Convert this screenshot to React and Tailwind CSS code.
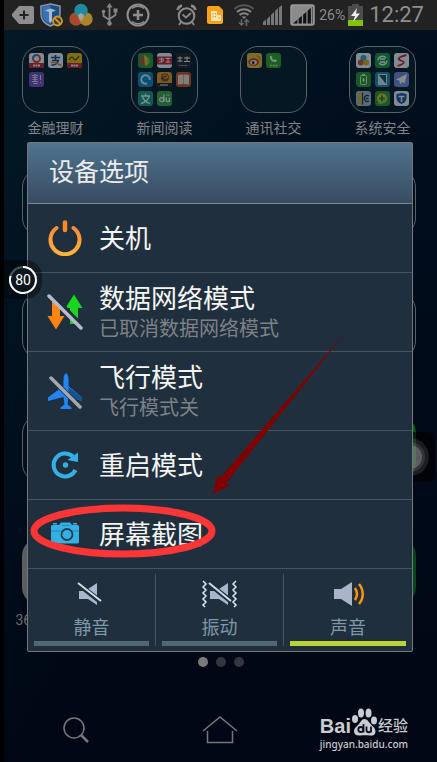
import React, { useState } from "react";

const CJK = "font-['Roboto','Noto_Sans_CJK_SC',sans-serif]";

// 15x15 drawings shown inside the home screen folders
const minis = {
  wallet: (
    <>
      <rect width="15" height="15" rx="3" fill="#fff"/>
      <circle cx="7.5" cy="5.5" r="3.5" fill="none" stroke="#d8413a" strokeWidth="2"/>
      <path d="M4 5.5a3.5 3.5 0 0 1 3.5-3.5" fill="none" stroke="#2f8fd0" strokeWidth="2"/>
      <path d="M0 10h15v2a3 3 0 0 1-3 3H3a3 3 0 0 1-3-3z" fill="#d81b24"/>
      <path d="M4 12.5h7" stroke="#fff" strokeWidth="2" strokeDasharray="2 .5"/>
    </>
  ),
  alipay: (
    <>
      <rect width="15" height="15" rx="3" fill="#fff"/>
      <path d="M3 4.5h9M7.5 2v5M4 7.5h6.500C9.500 10.500 6 12.500 3.500 12" fill="none" stroke="#1d3f7c" strokeWidth="1.500"/>
      <path d="M3 10c2-2.500 6 1 10.500 2.500" fill="none" stroke="#e88320" strokeWidth="1.500"/>
    </>
  ),
  lottery: (
    <>
      <rect width="15" height="15" rx="3" fill="#f2c400"/>
      <path d="M2 7c2-4 4-3 5-1s3 0 5-3M8 7l4-3" fill="none" stroke="#6b4300" strokeWidth="1.300"/>
      <path d="M0 10h15v2a3 3 0 0 1-3 3H3a3 3 0 0 1-3-3z" fill="#d81b24"/>
      <path d="M4 12.500h7" stroke="#fff" strokeWidth="2" strokeDasharray="2 .5"/>
    </>
  ),
  hui: (
    <>
      <rect width="15" height="15" rx="3" fill="#7a4fc4"/>
      <path d="M3 3.500h6M3.500 5.500h5M3.500 7.500h5M6 2v8M3 9.500h6M4 11.500h5M11.500 3v5M11.500 10v1" stroke="#e5d6ff" strokeWidth="1.100"/>
    </>
  ),
  books: (
    <>
      <rect width="15" height="15" rx="3" fill="#2f9a35"/>
      <path d="M3 3l5 2v8L3 11z" fill="#e5402b"/>
      <path d="M6 2c3 1 4 3 4 6s-1 4-3 5z" fill="#f4c425"/>
      <path d="M9 4c3 1 4 5 0 9z" fill="#73d23b"/>
    </>
  ),
  headline: (
    <>
      <rect width="15" height="15" rx="3" fill="#fff"/>
      <path d="M0 3.500h15v8H0z" fill="#d81b24"/>
      <path d="M2 6h5M4.500 4.500v5M2 9.500l5-2M8.500 5.500h5M11 4.500v5M8.500 9h5" stroke="#fff"/>
    </>
  ),
  reader: (
    <>
      <rect width="15" height="15" rx="3" fill="#28211f"/>
      <path d="M1.500 5h5M4 3.500v5.500M1.500 8h5M8 5h6M11 3.500v5.500M8 8.500h6" stroke="#fff"/>
      <path d="M3 12.500h9" stroke="#aaa" strokeDasharray="1 .5"/>
    </>
  ),
  swirl: (
    <>
      <rect width="15" height="15" rx="3" fill="#0d87bd"/>
      <path d="M9 11.500A4.300 4.300 0 1 1 11.800 8" fill="none" stroke="#d9f2ff" strokeWidth="2"/>
    </>
  ),
  comic: (
    <>
      <rect width="15" height="15" rx="3" fill="#e9a11c"/>
      <circle cx="8" cy="5.500" r="4" fill="#8b3d16"/>
      <path d="M5.500 5a2.500 2.500 0 0 1 5 1M7 6h3" fill="none" stroke="#f0b44a"/>
      <path d="M0 11h15v1a3 3 0 0 1-3 3H3a3 3 0 0 1-3-3z" fill="#201b17"/>
      <path d="M3 13h8" stroke="#fff"/>
    </>
  ),
  book: (
    <>
      <rect width="15" height="15" rx="3" fill="#d4551a"/>
      <path d="M2 3l5.500-.5v9.500L2 12.500zM8 2.500l5 .5v9.500L8 12z" fill="#f6e6d2"/>
    </>
  ),
  translate: (
    <>
      <rect width="15" height="15" rx="3" fill="#12a37f"/>
      <path d="M3 5h9M7.500 2.500V5M4.500 5.500c1 4 4 6 7.500 7M11 5.500c-1 4-4 6-8 7" fill="none" stroke="#fff" strokeWidth="1.300"/>
    </>
  ),
  du: (
    <>
      <rect width="15" height="15" rx="3" fill="#3bab3d"/>
      <circle cx="4.700" cy="8.700" r="2" fill="none" stroke="#fff" strokeWidth="1.300"/>
      <path d="M6.900 3.500v7.500M9.200 6.500v2.500a1.600 1.600 0 0 0 3.200 0V6.500M12.400 6.500V11M9.500 4h.8M11.500 4h.8" fill="none" stroke="#fff" strokeWidth="1.300"/>
    </>
  ),
  weibo: (
    <>
      <rect width="15" height="15" rx="3" fill="#f0c12c"/>
      <ellipse cx="6.700" cy="9" rx="5.200" ry="3.800" fill="#d8262b"/>
      <ellipse cx="6.500" cy="9.200" rx="3.300" ry="2.300" fill="#fff"/>
      <circle cx="6.200" cy="9.400" r="1.500" fill="#1b1b1b"/>
      <path d="M9.500 3a3.500 3.500 0 0 1 3.500 4" fill="none" stroke="#e6731d" strokeWidth="1.200"/>
    </>
  ),
  phone: (
    <>
      <rect width="15" height="15" rx="3" fill="#32a61e"/>
      <path d="M4.500 2.500c-2 3 1.500 7 5.500 6.500l1-1.500-2-1.200-1 .8C6.800 6.600 6 5.800 5.800 4.800l1-.8z" fill="#fff"/>
      <path d="M4 12.500h7.500" stroke="#b9ef9c" strokeWidth="1.500" strokeDasharray="2 .7"/>
    </>
  ),
  petals: (
    <>
      <rect width="15" height="15" rx="3" fill="#fff"/>
      <circle cx="7.500" cy="5" r="3" fill="#2aa8d0"/>
      <circle cx="4.800" cy="9.500" r="3" fill="#e0522c"/>
      <circle cx="10.200" cy="9.500" r="3" fill="#eab022"/>
    </>
  ),
  update: (
    <>
      <rect width="15" height="15" rx="3" fill="#159b3c"/>
      <path d="M3 7.500a4.500 4.500 0 0 1 8-2.500M12 7.500a4.500 4.500 0 0 1-8 2.500M5 6h5M5 9h5" fill="none" stroke="#fff" strokeWidth="1.400"/>
    </>
  ),
  slash: (
    <>
      <rect width="15" height="15" rx="3" fill="#fff"/>
      <path d="M12.500 2C8 3 3.500 5 5 6.500S11 8 9.500 10 5 12.500 3.500 13" fill="none" stroke="#d3232a" strokeWidth="1.800"/>
    </>
  ),
  battery: (
    <>
      <rect width="15" height="15" rx="3" fill="#2c9a27"/>
      <rect x="4.500" y="3.500" width="6" height="9" rx="1" fill="none" stroke="#d9f7cf"/>
      <path d="M6 2.500h3M7.500 6v4M5.800 8h3.400" stroke="#d9f7cf"/>
    </>
  ),
  tablet: (
    <>
      <rect width="15" height="15" rx="3" fill="#1394b7"/>
      <rect x="3" y="2" width="9" height="11" fill="#dbeef4"/>
      <path d="M4 3h7v9z" fill="#274555"/>
    </>
  ),
  plane: (
    <>
      <rect width="15" height="15" rx="3" fill="#7b8be0"/>
      <path d="M13 2L2 7.500l3.500 1.200L6 12.500l2-2.500 2.500 1.500z" fill="#fff"/>
    </>
  ),
  ruler: (
    <>
      <rect width="15" height="15" rx="3" fill="#aebfc6"/>
      <path d="M2 2h3v11H2z" fill="#e5b914"/>
      <path d="M6.500 1.500v12" stroke="#24343d" strokeWidth="1.200"/>
      <path d="M13 5a3 3 0 1 0 0 5M10 7.500h2.500" fill="none" stroke="#24343d" strokeWidth="1.300"/>
    </>
  ),
  safe: (
    <>
      <rect width="15" height="15" rx="3" fill="#2c9832"/>
      <circle cx="7" cy="7.500" r="5" fill="#f1c820"/>
      <path d="M7 4.500v6M4 7.500h6" stroke="#268a2c" strokeWidth="2"/>
      <path d="M3 12c4 1 9-2 9-6" fill="none" stroke="#8fd43d" strokeWidth="1.300"/>
    </>
  ),
  shield: (
    <>
      <rect width="15" height="15" rx="3" fill="#fff"/>
      <path d="M7.500 2l5 1v4c0 3-2 5-5 6-3-1-5-3-5-6V3z" fill="#1a55a8"/>
      <path d="M4.500 5.500h6M7.500 5v6" stroke="#fff" strokeWidth="1.500"/>
    </>
  ),
};

const folders = [
  { label: "金融理财", apps: ["wallet", "alipay", "lottery", "hui"] },
  { label: "新闻阅读", apps: ["books", "headline", "reader", "swirl", "comic", "book", "translate", "du"] },
  { label: "通讯社交", apps: ["weibo", "phone"] },
  { label: "系统安全", apps: ["petals", "update", "slash", "battery", "tablet", "plane", "ruler", "safe", "shield"] },
];

const tile = "w-[67px] h-[67px] rounded-[18px]";
const outline = `${tile} border border-[#5a6067]`;

function Folder({ label, apps }) {
  return (
    <button className="flex flex-col items-center">
      <span className={`${outline} bg-[#061724] grid grid-cols-3 content-start gap-1 p-1.5`}>
        {apps.map(a => (
          <svg key={a} width="15" height="15" viewBox="0 0 15 15" className="opacity-50">{minis[a]}</svg>
        ))}
      </span>
      <span className="mt-[5px] h-5 text-sm leading-5 text-[#808488]">{label}</span>
    </button>
  );
}

function StatusBar() {
  return (
    <header className="h-[30px] bg-[#222222] flex items-center justify-between pl-2 pr-[13px]">
      <div className="flex items-center gap-1.5">
        <svg width="22" height="18" viewBox="0 0 22 18">
          <path d="M7 0h13a2 2 0 0 1 2 2v14a2 2 0 0 1-2 2H7L0 10V8z" fill="#8e8e8e"/>
          <path d="M12 4.500v9M7.500 9h9" stroke="#222" strokeWidth="2"/>
        </svg>
        <svg width="23" height="24" viewBox="0 0 23 24">
          <path d="M10.500 1l9.500 2v8c0 6-4 10-9.500 12C5 21 1 17 1 11V3z" fill="#1b4d87" stroke="#8b97a3" strokeWidth="1.500"/>
          <path d="M10.500 2.500V21C6 19.500 2.500 16 2.500 11V4z" fill="#3a73b3"/>
          <path d="M5 7.500l5.500-2 5.500 2-4 1.500v9l-1.500 2-1.500-2V9z" fill="#a9bccd"/>
          <circle cx="17.500" cy="18" r="4.500" fill="#4d3c1b" stroke="#c89a35" strokeWidth="1.800"/>
          <path d="M14.500 15l6 6" stroke="#c89a35" strokeWidth="1.800"/>
        </svg>
        <svg width="24" height="24" viewBox="0 0 24 24">
          <circle cx="7" cy="16" r="6.700" fill="#a8492c"/>
          <circle cx="17" cy="16" r="6.700" fill="#ab852a"/>
          <circle cx="12" cy="7.500" r="6.700" fill="#2289a3"/>
          <path d="M12 10l3 2-1 4-2 2-2-2-1-4z" fill="#aaa592"/>
        </svg>
        <svg width="21" height="24" viewBox="0 0 21 24" fill="none" stroke="#858585" strokeWidth="1.800">
          <path d="M10.500 3v16M4.500 9.500v3.500l6 4M16.500 8v4l-6 4"/>
          <path d="M10.500 0l3 4.500h-6z" fill="#858585" stroke="none"/>
          <circle cx="10.500" cy="20.500" r="2.300" fill="#858585" stroke="none"/>
          <circle cx="4.500" cy="8.500" r="1.800" fill="#858585" stroke="none"/>
          <path d="M14.500 5.500h4v4h-4z" fill="#858585" stroke="none"/>
        </svg>
        <svg width="24" height="24" viewBox="0 0 24 24" fill="none" stroke="#8e8e8e">
          <circle cx="12" cy="12" r="10.500" strokeWidth="2"/>
          <path d="M6 5.500a9 9 0 0 1 12 0M6 18.500a9 9 0 0 0 12 0" strokeWidth="1.500"/>
          <path d="M12 7v10M7 12h10" strokeWidth="2.500"/>
        </svg>
      </div>
      <div className="flex items-center gap-2">
        <svg width="21" height="22" viewBox="0 0 21 22" fill="none" stroke="#8b8b8b">
          <circle cx="10.500" cy="12" r="7.800" strokeWidth="2"/>
          <path d="M1.500 6A6 6 0 0 1 6 1.500M19.500 6A6 6 0 0 0 15 1.500" strokeWidth="2.500"/>
          <path d="M6.500 10.500l3.500 3 5-4.500M5 18l-2 3M16 18l2 3" strokeWidth="1.800"/>
        </svg>
        <svg width="20" height="20" viewBox="0 0 20 20">
          <path d="M4 1h10l4 4v12a2 2 0 0 1-2 2H4a2 2 0 0 1-2-2V3a2 2 0 0 1 2-2z" fill="#fba318"/>
          <path d="M6 6h6v10H6zM12 10h4v6h-4z" fill="#f7e3b8"/>
          <path d="M8 8v1.500M10.500 8v1.500M8 11v1.500M10.500 11v1.500M14 12v1.500" stroke="#ee9614"/>
        </svg>
        <svg width="22" height="24" viewBox="0 0 22 24" fill="none" stroke="#858585" strokeWidth="2">
          <path d="M1.500 6a14 14 0 0 1 19 0" stroke="#555"/>
          <path d="M4 9a10 10 0 0 1 14 0M6.500 12a6.500 6.500 0 0 1 9 0"/>
          <path d="M8.500 13.500h5L11 16z" fill="#858585" stroke="none"/>
          <path d="M8.500 16v6M6 19.500l2.500 2.500 2-2M13.500 23v-6M11.500 19l2-2.500 2.500 2.500" stroke="#666" strokeWidth="1.500"/>
        </svg>
        <svg width="19" height="20" viewBox="0 0 19 20" fill="#777">
          <path d="M0 17l3-2.500V20H0zM4 14l3-3v9H4zM8 10l3-3v13H8zM12 6l3-3v17h-3zM16 2.500L19 0v20h-3z"/>
        </svg>
        <div className="flex items-center">
          <svg width="25" height="22" viewBox="0 0 25 22">
            <rect x="1" y="1" width="23" height="20" rx="2" fill="#8b8b8b" stroke="#999" strokeWidth="1.500"/>
            <path d="M22.500 2.500v17H3z" fill="#111"/>
            <path d="M8 15v5M12.500 11v9M17 7v13M21.500 3v17" stroke="#8b8b8b" strokeWidth="1.300"/>
          </svg>
          <span className="ml-1 w-[28px] text-sm text-[#8c8c8c]">26%</span>
          <svg width="15" height="22" viewBox="0 0 15 22" className="ml-px">
            <path d="M4 0h7v2h4v14H0V2h4z" fill="#4c4c4c"/>
            <path d="M0 16h15v6H0z" fill="#7fc400"/>
            <path d="M9 4l-6 8h4l-2 6 7-8.500H8z" fill="#eee"/>
          </svg>
          <span className="ml-1.5 text-[22px] leading-6 text-[#8e8e8e]">12:27</span>
        </div>
      </div>
    </header>
  );
}

const PowerIcon = () => (
  <svg width="36" height="36" viewBox="0 0 36 36" fill="none" strokeLinecap="round">
    <defs>
      <linearGradient id="pw" x1="0" y1="0" x2="0" y2="1">
        <stop offset="0" stopColor="#ff8a3c"/>
        <stop offset="1" stopColor="#ffb43a"/>
      </linearGradient>
    </defs>
    <path d="M9.500 8A14.500 14.500 0 1 0 26.500 8" stroke="url(#pw)" strokeWidth="4"/>
    <path d="M18 2.500v7.500" stroke="#f98a1e" strokeWidth="4.500"/>
  </svg>
);

const DataIcon = () => (
  <svg width="36" height="36" viewBox="0 0 36 36">
    <path d="M5 7h8v15h4.500L9 35.500.5 22H5z" fill="#ff8412"/>
    <path d="M27 .5L35.500 14H31v16h-8V14h-4.500z" fill="#18d71e"/>
    <path d="M4 1l31 32" stroke="#1f2f3d" strokeWidth="6"/>
    <path d="M2 2l32 32" stroke="#b4bcca" strokeWidth="3.500" strokeLinecap="round"/>
  </svg>
);

const AirplaneIcon = () => (
  <svg width="36" height="36" viewBox="0 0 36 36">
    <path d="M19 0c2 1.500 2.500 4 2.500 7v6L35 24.500V28l-13.500-4-1 7.500 4 3V36h-11v-1.500l4-3-1-7.500L1 28v-3.500L16.500 13V7c0-3 .5-5.500 2.500-7z" fill="#2384f5"/>
    <path d="M21.500 14L35 24.500V28l-13.500-4z" fill="#155391"/>
    <path d="M4 5l29 29" stroke="#1f2f3d" strokeWidth="5"/>
    <path d="M4 5l29 29" stroke="#a3a8ae" strokeWidth="3.500" strokeLinecap="round"/>
  </svg>
);

const RestartIcon = () => (
  <svg width="36" height="36" viewBox="0 0 36 36" fill="none">
    <path d="M28.500 23A11.500 11.500 0 1 1 26 9.500" stroke="#33b1e4" strokeWidth="4"/>
    <path d="M31 5.500V15L20.500 13z" fill="#33b1e4"/>
    <circle cx="18.500" cy="18" r="2.700" fill="#33b1e4"/>
  </svg>
);

const CameraIcon = () => (
  <svg width="36" height="36" viewBox="0 0 36 36">
    <path d="M5.500 9H12l2-2.500h9L25 9h5.500a1.500 1.500 0 0 1 1.500 1.500v15.500a1.500 1.500 0 0 1-1.500 1.500h-25A1.500 1.500 0 0 1 4 26V10.500A1.500 1.500 0 0 1 5.500 9zM6 7h4v1.500H6zM26 7h4v1.500h-4z" fill="#33b1e4"/>
    <path d="M4 15h28M15 9.500h7" stroke="#2488b3"/>
    <circle cx="20" cy="18.500" r="5.500" fill="#33b1e4" stroke="#1f3b50" strokeWidth="1.800"/>
  </svg>
);

const options = [
  { title: "关机", icon: <PowerIcon/> },
  { title: "数据网络模式", note: "已取消数据网络模式", icon: <DataIcon/> },
  { title: "飞行模式", note: "飞行模式关", icon: <AirplaneIcon/> },
  { title: "重启模式", icon: <RestartIcon/> },
  { title: "屏幕截图", icon: <CameraIcon/> },
];

const sounds = [
  {
    id: "mute",
    label: "静音",
    icon: (
      <>
        <path d="M6 11h6L24 3v22l-9-6H6z" fill="#a9b6cd"/>
        <path d="M4 3l24 19" stroke="#1f2f3d" strokeWidth="5"/>
        <path d="M5 3l23 18" stroke="#d3dae6" strokeWidth="2"/>
      </>
    ),
  },
  {
    id: "vibrate",
    label: "振动",
    icon: (
      <>
        <path d="M9 11h6l12-8v22l-9-6H9z" fill="#a9b6cd"/>
        <path d="M7 3l24 19" stroke="#1f2f3d" strokeWidth="5"/>
        <path d="M8 3l22 18" stroke="#d3dae6" strokeWidth="2"/>
        <path d="M2 1l3 3-3 3 3 3-3 3 3 3-3 3 3 3-3 3 2 2M35 1l-3 3 3 3-3 3 3 3-3 3 3 3-3 3 3 3-2 2" fill="none" stroke="#dfe5ee" strokeWidth="1.500"/>
      </>
    ),
  },
  {
    id: "sound",
    label: "声音",
    icon: (
      <>
        <path d="M4 9h7l11-7v24l-11-7H4z" fill="#aab4c8"/>
        <path d="M25 8c2.500 3.500 2.500 8 0 12M29 4c5 6 5 14 0 20" fill="none" stroke="#ff950f" strokeWidth="2.500"/>
      </>
    ),
  },
];

function PowerDialog() {
  const [mode, setMode] = useState("sound");

  return (
    <section role="dialog" aria-labelledby="dlg-title" className="bg-[#1f2f3d] border border-[#73787c] rounded-xs">
      <h1
        id="dlg-title"
        className="h-[61px] pl-[21px] flex items-center border-b border-[#7b858e] bg-linear-to-b from-[#50738f] to-[#374c61] text-[25px] font-normal text-[#ececec]"
      >
        设备选项
      </h1>
      <ul>
        {options.map(o => (
          <li key={o.title} className="border-b border-[#46545f]">
            <button className={`${o.note ? "h-[78px]" : "h-[68px]"} w-full pl-[19px] flex items-center gap-4 text-left`}>
              <span className="shrink-0">{o.icon}</span>
              <span className="pt-0.5">
                <span className="block text-[26px] leading-8 text-[#f5f5f5]">{o.title}</span>
                {o.note && <span className="block text-xl leading-7 text-[#7d8185]">{o.note}</span>}
              </span>
            </button>
          </li>
        ))}
      </ul>

      {/* Ringer mode */}
      <div role="radiogroup" className="grid grid-cols-3 py-[5px] divide-x divide-[#46545f]">
        {sounds.map(s => (
          <label key={s.id} className="flex flex-col items-center pt-1.5 px-1.5 text-lg leading-6 text-[#7f97aa]">
            <input
              type="radio"
              name="ringer"
              value={s.id}
              checked={mode === s.id}
              onChange={() => setMode(s.id)}
              className="sr-only"
            />
            <svg width="37" height="28" viewBox="0 0 37 28">{s.icon}</svg>
            <span className="mt-2">{s.label}</span>
            <span className={`mt-px h-[5px] w-full ${mode === s.id ? "bg-[#b7d334]" : "bg-[#526676]"}`}/>
          </label>
        ))}
      </div>
    </section>
  );
}

function BaiduMark() {
  return (
    <div className="w-[90px] text-[#c9ccd0]">
      <div className="flex items-end h-7">
        <span className="font-['Liberation_Sans',sans-serif] text-xl leading-5 h-5 font-bold">Bai</span>
        <svg width="27" height="28" viewBox="0 0 27 28" fill="#c9ccd0">
          <ellipse cx="4" cy="11" rx="3" ry="4"/>
          <ellipse cx="10" cy="5" rx="3" ry="4.500"/>
          <ellipse cx="17.500" cy="5" rx="3" ry="4.500"/>
          <ellipse cx="23" cy="12.500" rx="3" ry="4"/>
          <path d="M13.500 11c3 0 4 3 6.500 5.500s4.500 4 4.500 7c0 4-3.500 4.500-6 4-3-.5-6-.5-9 0-4 .5-6.500-1-6.500-4.500 0-3 2.500-4.500 4.500-6.500s3-5.500 6-5.500z"/>
          <g fill="none" stroke="#0a1420" strokeWidth="1.800">
            <circle cx="9.800" cy="21.500" r="2.500"/>
            <path d="M12.500 16v8.500M15.500 18.500v3.500a2.200 2.200 0 0 0 4.500 0v-3.500M20 18.500v6"/>
          </g>
        </svg>
        <span className="text-[15px] leading-5 h-5 font-medium">经验</span>
      </div>
      <div className="font-['Noto_Sans',sans-serif] text-[10px] leading-4 font-medium whitespace-nowrap">jingyan.baidu.com</div>
    </div>
  );
}

export default function App() {
  return (
    <main className={`${CJK} relative min-h-screen overflow-hidden border-l-4 border-black bg-linear-to-b from-[#010f1f] to-[#000714]`}>
      <div className="absolute inset-0 bg-linear-to-br from-[#05242c]/50 via-transparent to-transparent"/>

      {/* Home screen */}
      <div className="relative">
        <StatusBar/>
        <div className="-ml-[3px] pt-4 grid grid-cols-4 auto-rows-[92px] gap-y-[31px] justify-items-center">
          {folders.map(f => <Folder key={f.label} {...f}/>)}
          {[2, 3, 4].map(row => (
            <React.Fragment key={row}>
              <div className={`${outline} col-start-1`}/>
              {row === 4
                ? <div className={`${tile} col-start-4 bg-[#0a5c14]`}/>
                : <div className={`${outline} col-start-4`}/>}
            </React.Fragment>
          ))}
          <div className="col-start-1 w-20">
            <div className={`${tile} mx-auto bg-[#5c5f61]`}/>
            <div className="mt-[5px] text-sm leading-5 text-[#6b6e71]">36</div>
          </div>
          <div className={`${tile} col-start-4 bg-[#07451b]`}/>
        </div>

        <div className="mt-[27px] flex justify-center gap-2">
          <span className="size-2.5 rounded-full bg-[#7a7a7a]"/>
          <span className="size-2.5 rounded-full bg-[#31363c]"/>
          <span className="size-2.5 rounded-full bg-[#31363c]"/>
        </div>

        <footer className="mt-10 grid grid-cols-3 justify-items-center items-center h-[46px]">
          <button aria-label="search">
            <svg width="28" height="28" viewBox="0 0 28 28" fill="none" stroke="#777">
              <circle cx="12" cy="12" r="10" strokeWidth="1.500"/>
              <path d="M19 19l7 7" strokeWidth="2.500"/>
            </svg>
          </button>
          <button aria-label="home">
            <svg width="36" height="30" viewBox="0 0 36 30" fill="none" stroke="#777" strokeWidth="1.500">
              <path d="M1 16L18 2l17 14M5.500 16v11.500h25V16"/>
            </svg>
          </button>
          <BaiduMark/>
        </footer>
      </div>

      {/* Assistive ball at the right edge */}
      <div className="absolute right-0.5 top-[432px] w-[50px] h-[50px] rounded-lg bg-black/60 flex items-center justify-center">
        <div className="size-[38px] rounded-full bg-white/10 flex items-center justify-center">
          <div className="size-[30px] rounded-full bg-white/10 flex items-center justify-center">
            <div className="size-6 rounded-full bg-white/20"/>
          </div>
        </div>
      </div>

      <div className="absolute inset-0 pt-[142px] pl-[23px] pr-6">
        <PowerDialog/>
      </div>

      {/* Battery bubble */}
      <div className="absolute left-0 top-[260px] w-[38px] h-[39px] rounded-r-2xl bg-black/40 flex items-center justify-center">
        <svg width="28" height="28" viewBox="0 0 28 28" className="absolute">
          <circle cx="14" cy="14" r="13" fill="#0c161d" stroke="#4d565c" strokeWidth="2"/>
          <path d="M14 1A13 13 0 1 1 1.600 10" fill="none" stroke="#fff" strokeWidth="2"/>
        </svg>
        <span className="relative text-sm leading-none text-white">80</span>
      </div>

      {/* Hand-drawn callout */}
      <svg width="320" height="230" viewBox="30 330 320 230" className="absolute left-[26px] top-[330px] pointer-events-none">
        <ellipse cx="123" cy="531" rx="89" ry="23" fill="none" stroke="#fc3636" strokeWidth="7"/>
        <path d="M346 332L226 483l4 2-17 9 4-18 4 1z" fill="#800000"/>
      </svg>
    </main>
  );
}
